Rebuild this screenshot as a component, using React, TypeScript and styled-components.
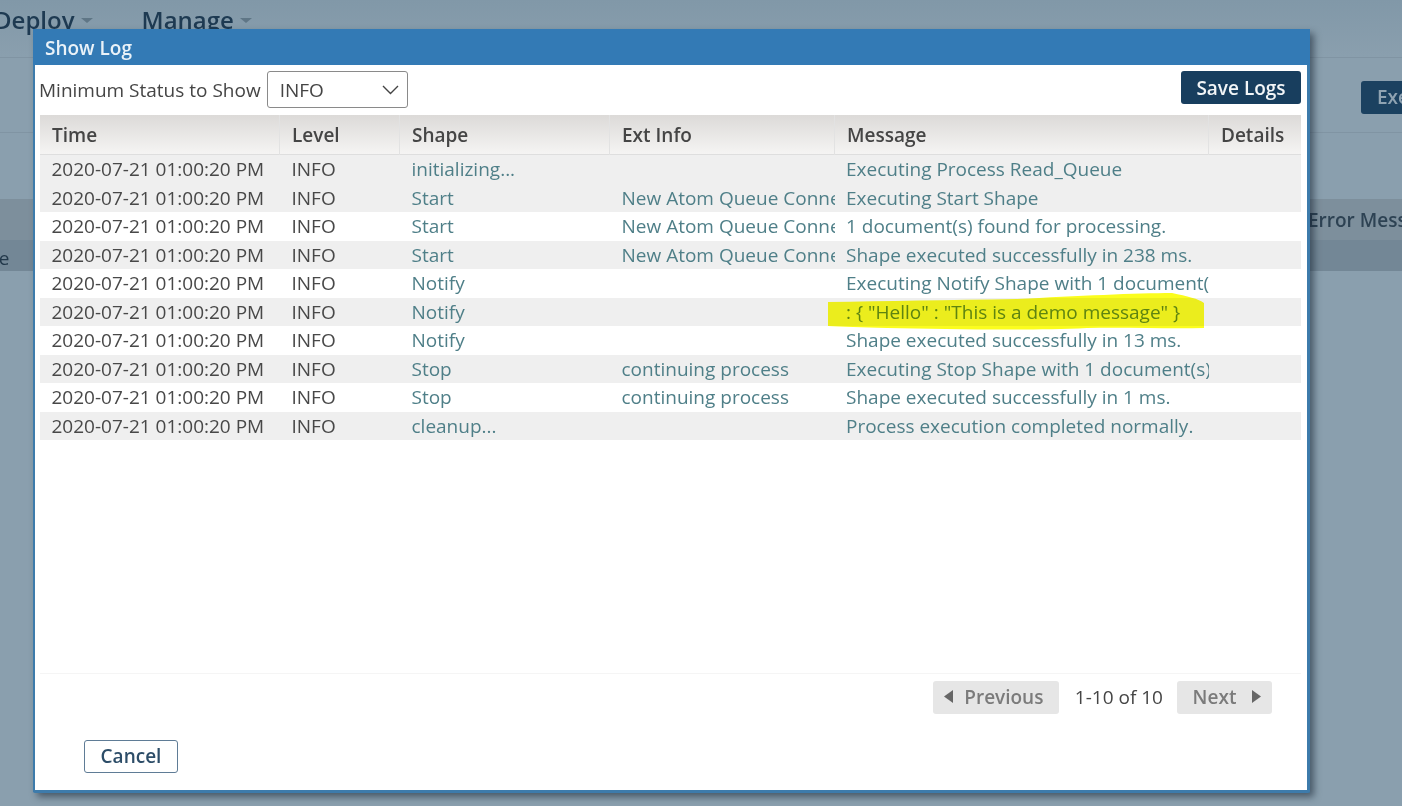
import React from "react";
import styled, { createGlobalStyle } from "styled-components";

const Global = createGlobalStyle`
  html, body { margin: 0; padding: 0; height: 100%; overflow: hidden; background: #8a9fae; }
  #root { height: 100%; }
  * { box-sizing: border-box; }
`;

const Page = styled.div`
  position: relative;
  width: 1402px;
  height: 806px;
  overflow: hidden;
  background: #8a9fae;
  font-family: "Open Sans", "Noto Sans", sans-serif;
  filter: blur(0.45px);
`;

const NavBar = styled.nav`
  height: 58px;
  display: flex;
  align-items: flex-start;
  gap: 49px;
  margin-left: -6px;
  padding-top: 4px;
  background: linear-gradient(#8198a8, #8a9fae);
  border-bottom: 1px solid #8094a3;
`;

const NavItem = styled.div`
  display: flex;
  align-items: center;
  gap: 6px;
  font-size: 24px;
  line-height: 32px;
  font-weight: 600;
  color: #1e3a52;
`;

const NavCaret = styled.span`
  width: 0;
  height: 0;
  border-left: 6px solid transparent;
  border-right: 6px solid transparent;
  border-top: 5px solid #5f7686;
`;

const BackToolbar = styled.div`
  height: 75px;
  display: flex;
  justify-content: flex-end;
  align-items: flex-start;
  padding-top: 23px;
  border-bottom: 1px solid #8094a3;
`;

const BackButton = styled.div`
  width: 70px;
  height: 33px;
  margin-right: -29px;
  padding-left: 16px;
  background: #1b4160;
  border-radius: 3px;
  color: #8fa3b2;
  font-size: 19px;
  font-weight: 600;
  line-height: 33px;
`;

const BackHeader = styled.div`
  height: 41px;
  margin-top: 66px;
  display: flex;
  justify-content: flex-end;
  align-items: center;
  background: #7d8f9c;
  color: #2d4253;
  font-size: 19px;
  font-weight: 600;
  white-space: nowrap;
  overflow: hidden;
`;

const BackHeaderLabel = styled.span`
  width: 94px;
  flex: none;
  overflow: hidden;
`;

const BackRow = styled.div`
  height: 31px;
  background: #738796;
  color: #23394b;
  font-size: 19px;
  line-height: 36px;
  text-indent: -50px;
  white-space: nowrap;
  overflow: hidden;
`;

const Modal = styled.section`
  position: absolute;
  left: 33px;
  top: 29px;
  width: 1277px;
  height: 764px;
  display: flex;
  flex-direction: column;
  background: #fff;
  border-left: 2px solid #3d7bab;
  border-right: 3px solid #3d7bab;
  border-bottom: 3px solid #3d7bab;
  border-radius: 2px;
  box-shadow: 4px 4px 7px rgba(20, 35, 50, 0.55);
`;

const ModalTitle = styled.header`
  height: 36px;
  margin: 0 -3px 0 -2px;
  padding-left: 12px;
  background: #337ab5;
  color: #eaf2f8;
  font-size: 19px;
  font-weight: 600;
  line-height: 38px;
`;

const ModalBody = styled.div`
  flex: 1;
  min-height: 0;
  display: flex;
  flex-direction: column;
  padding: 6px 6px 17px 5px;
`;

const Toolbar = styled.div`
  height: 37px;
  margin-bottom: 7px;
  display: flex;
  align-items: flex-start;
`;

const FilterLabel = styled.label`
  font-size: 19px;
  line-height: 38px;
  color: #454545;
  margin: 0 6px 0 -1px;
  white-space: nowrap;
`;

const Select = styled.div`
  width: 141px;
  height: 37px;
  display: flex;
  align-items: center;
  justify-content: space-between;
  padding: 0 8px 0 12px;
  border: 1px solid #8a8a8a;
  border-radius: 3px;
  font-size: 19px;
  color: #454545;
  background: #fff;
`;

const SaveButton = styled.button`
  margin-left: auto;
  width: 120px;
  height: 33px;
  border: 0;
  border-radius: 3px;
  background: #183e5e;
  color: #f2f5f7;
  font-family: inherit;
  font-size: 19px;
  font-weight: 600;
  padding: 0;
`;

const LogTable = styled.div`
  flex: 1;
  min-height: 0;
  font-size: 19px;
`;

const columns = "240px 120px 210px 225px 374px 92px";

const HeaderRow = styled.div`
  display: grid;
  grid-template-columns: ${columns};
  height: 40px;
  background: linear-gradient(#dcdad8, #f5f4f3);
  border-bottom: 1px solid #dedede;
`;

const HeaderCell = styled.div<{ $last?: boolean }>`
  padding-left: 12px;
  font-weight: 600;
  font-size: 19px;
  line-height: 40px;
  color: #454545;
  border-right: ${(p) => (p.$last ? "0" : "1px solid #e2e2e2")};
`;

const Row = styled.div<{ $shaded: boolean }>`
  display: grid;
  grid-template-columns: ${columns};
  height: 28.5px;
  background: ${(p) => (p.$shaded ? "#efefef" : "#fff")};
`;

const Cell = styled.div<{ $teal?: boolean }>`
  position: relative;
  padding-left: 11.5px;
  line-height: 28px;
  white-space: nowrap;
  overflow: hidden;
  color: ${(p) => (p.$teal ? "#4f7f88" : "#484848")};
`;

const MessageCell = styled(Cell)<{ $marked?: boolean }>`
  padding-left: 11px;
  color: ${(p) => (p.$marked ? "#5f8588" : "#4f7f88")};
`;

const HighlightWrap = styled.div`
  position: relative;
`;

const Highlight = styled.svg`
  position: absolute;
  left: -8px;
  top: -5px;
  width: 378px;
  height: 38px;
  mix-blend-mode: multiply;
  pointer-events: none;
`;

const Pager = styled.div`
  display: flex;
  justify-content: flex-end;
  align-items: center;
  gap: 16px;
  padding: 7px 29px 0 0;
  border-top: 1px solid #f5f5f5;
`;

const PagerButton = styled.button<{ $wide?: boolean }>`
  width: ${(p) => (p.$wide ? "126px" : "95px")};
  height: 33px;
  display: flex;
  align-items: center;
  justify-content: center;
  gap: ${(p) => (p.$wide ? "10px" : "15px")};
  border: 0;
  border-radius: 3px;
  background: #e6e6e6;
  color: #7b7b7b;
  font-family: inherit;
  font-size: 19px;
  font-weight: 600;
  padding: ${(p) => (p.$wide ? "0 4px 2px 0" : "0 0 2px 5px")};
`;

const PagerCount = styled.span`
  font-size: 19px;
  color: #454545;
  margin-right: -2px;
  padding-bottom: 2px;
`;

const Footer = styled.div`
  display: flex;
  padding: 26px 0 0 44px;
`;

const CancelButton = styled.button`
  width: 94px;
  height: 33px;
  border: 1.5px solid #5f7c96;
  border-radius: 3px;
  background: #fff;
  color: #2d4d68;
  font-family: inherit;
  font-size: 19px;
  font-weight: 600;
  padding: 0 0 2px;
`;

type Log = { shape: string; ext?: string; message: string };

const logs: Log[] = [
  { shape: "initializing...", message: "Executing Process Read_Queue" },
  { shape: "Start", ext: "New Atom Queue Connector", message: "Executing Start Shape" },
  { shape: "Start", ext: "New Atom Queue Connector", message: "1 document(s) found for processing." },
  { shape: "Start", ext: "New Atom Queue Connector", message: "Shape executed successfully in 238 ms." },
  { shape: "Notify", message: "Executing Notify Shape with 1 document(s)" },
  { shape: "Notify", message: ': { "Hello" : "This is a demo message" }' },
  { shape: "Notify", message: "Shape executed successfully in 13 ms." },
  { shape: "Stop", ext: "continuing process", message: "Executing Stop Shape with 1 document(s)" },
  { shape: "Stop", ext: "continuing process", message: "Shape executed successfully in 1 ms." },
  { shape: "cleanup...", message: "Process execution completed normally." },
];

const shaded = [true, true, false, true, false, true, false, true, false, true];

export default function App() {
  return (
    <Page>
      <Global />
      <NavBar>
        <NavItem>Deploy<NavCaret /></NavItem>
        <NavItem>Manage<NavCaret /></NavItem>
      </NavBar>
      <BackToolbar>
        <BackButton>Execute</BackButton>
      </BackToolbar>
      <BackHeader>
        <BackHeaderLabel>Error Message</BackHeaderLabel>
      </BackHeader>
      <BackRow>Queue</BackRow>

      <Modal>
        <ModalTitle>Show Log</ModalTitle>
        <ModalBody>
          <Toolbar>
            <FilterLabel>Minimum Status to Show</FilterLabel>
            <Select>
              INFO
              <svg width="17" height="10" viewBox="0 0 17 10" fill="none" stroke="#444" strokeWidth="1.4">
                <path d="M1 1l7.5 7.5L16 1" />
              </svg>
            </Select>
            <SaveButton>Save Logs</SaveButton>
          </Toolbar>

          <LogTable>
            <HeaderRow>
              <HeaderCell>Time</HeaderCell>
              <HeaderCell>Level</HeaderCell>
              <HeaderCell>Shape</HeaderCell>
              <HeaderCell>Ext Info</HeaderCell>
              <HeaderCell>Message</HeaderCell>
              <HeaderCell $last>Details</HeaderCell>
            </HeaderRow>
            {logs.map((log, i) => (
              <Row key={i} $shaded={shaded[i]}>
                <Cell>2020-07-21 01:00:20 PM</Cell>
                <Cell>INFO</Cell>
                <Cell $teal>{log.shape}</Cell>
                <Cell $teal>{log.ext}</Cell>
                {i === 5 ? (
                  <HighlightWrap>
                    <MessageCell $marked>{log.message}</MessageCell>
                    <Highlight viewBox="0 0 378 38">
                      <path
                        d="M1 9 C60 8 120 7 190 6 C250 3 310 0 345 0 C360 3 372 6 377 10 L377 35 C340 36 300 34 260 35 C200 38 120 36 60 35 C35 34 15 34 1 33 Z"
                        fill="#fbfd1e"
                      />
                    </Highlight>
                  </HighlightWrap>
                ) : (
                  <MessageCell>{log.message}</MessageCell>
                )}
                <Cell />
              </Row>
            ))}
          </LogTable>

          <Pager>
            <PagerButton $wide>
              <svg width="10" height="13" viewBox="0 0 10 13" fill="#666"><path d="M9 0v13L0 6.500z" /></svg>
              Previous
            </PagerButton>
            <PagerCount>1-10 of 10</PagerCount>
            <PagerButton>
              Next
              <svg width="10" height="13" viewBox="0 0 10 13" fill="#666"><path d="M1 0v13l9-6.500z" /></svg>
            </PagerButton>
          </Pager>
          <Footer>
            <CancelButton>Cancel</CancelButton>
          </Footer>
        </ModalBody>
      </Modal>
    </Page>
  );
}
